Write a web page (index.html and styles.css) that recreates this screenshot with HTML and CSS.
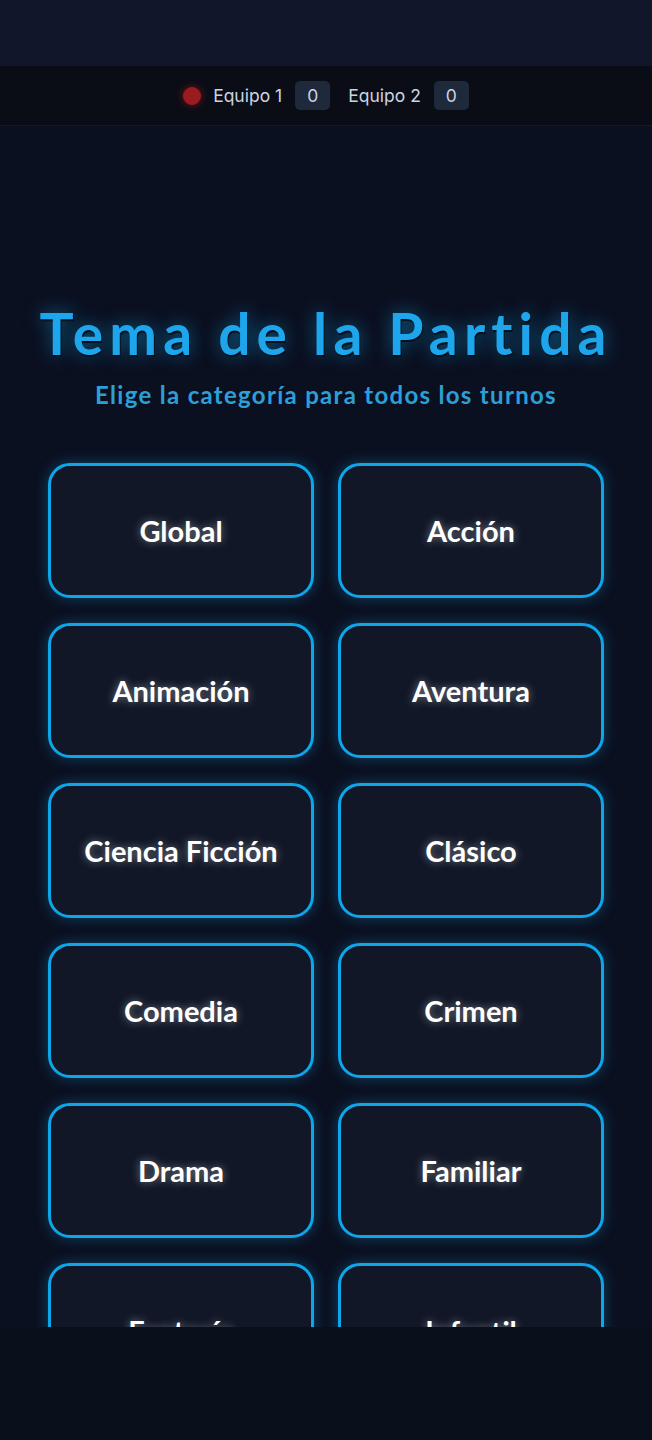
FILE: index.html
```html
<!DOCTYPE html>
<html lang="es">
<head>
  <meta charset="UTF-8" />
  <meta name="viewport" content="width=device-width, initial-scale=1.0">
  <title>Tema de la Partida</title>
  <link rel="stylesheet" href="styles.css">
</head>
<body>
  <header class="topbar"></header>

  <div class="scorebar">
    <span class="turn-dot"></span>
    <span class="team">Equipo 1</span>
    <span class="score">0</span>
    <span class="team team-2">Equipo 2</span>
    <span class="score">0</span>
  </div>

  <main class="screen">
    <h1 class="title">Tema de la Partida</h1>
    <p class="subtitle">Elige la categoría para todos los turnos</p>

    <div class="categories">
      <button class="cat">Global</button>
      <button class="cat">Acción</button>
      <button class="cat">Animación</button>
      <button class="cat">Aventura</button>
      <button class="cat">Ciencia Ficción</button>
      <button class="cat">Clásico</button>
      <button class="cat">Comedia</button>
      <button class="cat">Crimen</button>
      <button class="cat">Drama</button>
      <button class="cat">Familiar</button>
      <button class="cat">Fantasía</button>
      <button class="cat">Infantil</button>
    </div>
  </main>

  <footer class="bottom"></footer>
</body>
</html>
```

FILE: styles.css
```css
body {
  margin: 0;
  font-family: 'Lato', 'Noto Sans', sans-serif;
  background: #0a0f1c;
  color: #eee;
  height: 1440px;
  display: flex;
  flex-direction: column;
}
.topbar {
  height: 66px;
  background: #10172a;
  flex-shrink: 0;
}
.scorebar {
  height: 59px;
  display: flex;
  align-items: center;
  justify-content: center;
  background: #0a0d16;
  border-bottom: 1px solid #141a27;
  flex-shrink: 0;
  font-family: 'Inter', sans-serif;
  font-size: 17.5px;
  color: #cbd5e1;
}
.turn-dot {
  width: 18px;
  height: 18px;
  border-radius: 50%;
  background: #9b1c1f;
  box-shadow: 0 0 8px rgba(185, 28, 28, 0.6);
  margin-right: 12px;
}
.score {
  background: #1e293b;
  color: #cbd5e1;
  border-radius: 5px;
  width: 35px;
  height: 29px;
  display: flex;
  align-items: center;
  justify-content: center;
  margin-left: 13px;
}
.team-2 {
  margin-left: 18px;
}
.screen {
  height: 1201px;
  overflow: hidden;
  padding: 0 48px;
  background: #0b1020;
  flex-shrink: 0;
  box-sizing: border-box;
}
.title {
  margin: 173px -40px 0;
  white-space: nowrap;
  text-align: center;
  font-size: 57px;
  line-height: 68px;
  font-weight: 700;
  letter-spacing: 6.1px;
  color: #1ea6ec;
  text-shadow: 1px 2px 0 #06101c, 0 0 18px rgba(14, 165, 233, 0.55);
}
.subtitle {
  margin: 14px 0 0;
  text-align: center;
  font-size: 24px;
  line-height: 28px;
  font-weight: 700;
  letter-spacing: 1.3px;
  color: #2c9fd8;
}
.categories {
  margin-top: 54px;
  display: grid;
  grid-template-columns: 1fr 1fr;
  gap: 25px 24px;
}
.cat {
  height: 135px;
  border: 3px solid #0ea5e9;
  border-radius: 22px;
  background: #111727;
  box-shadow: 0 0 14px rgba(14, 165, 233, 0.35);
  color: #fff;
  font-family: 'Lato', 'Noto Sans', sans-serif;
  font-size: 29px;
  font-weight: 700;
  text-shadow: 0 0 8px rgba(255, 255, 255, 0.45);
  cursor: pointer;
}
.bottom {
  flex-grow: 1;
  background: #0a0f1c;
}
```
